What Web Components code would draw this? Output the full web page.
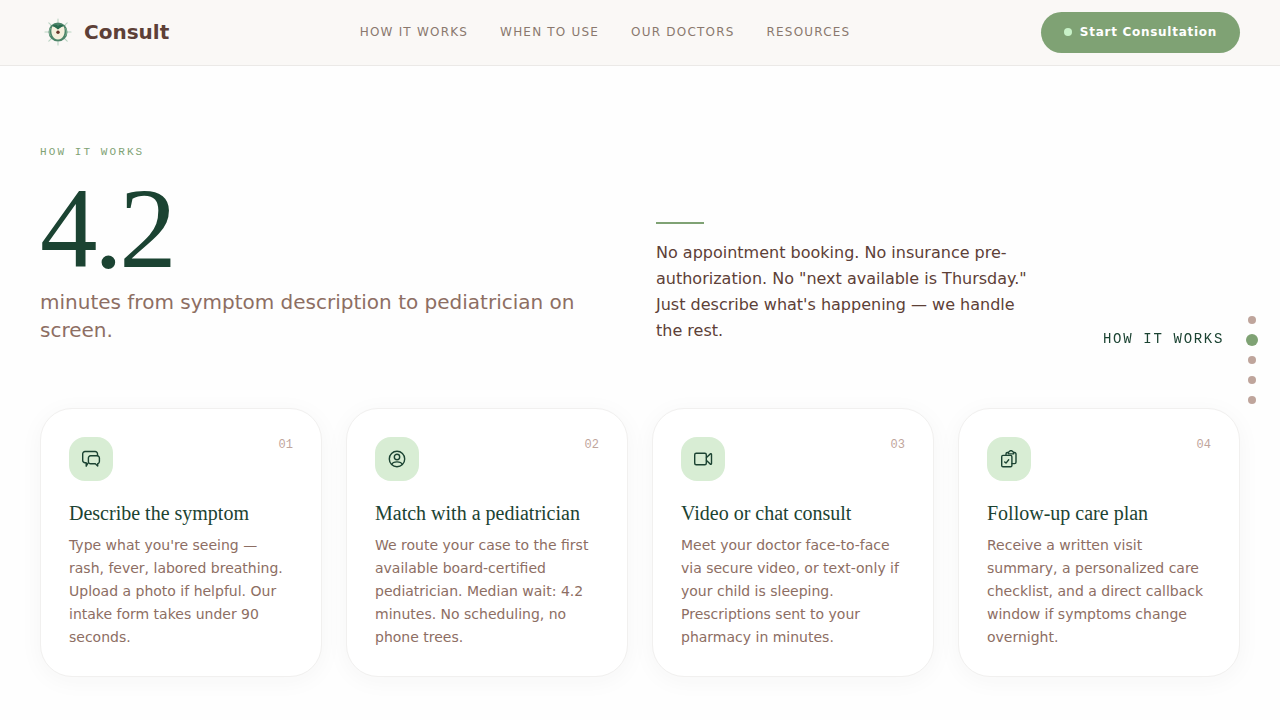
<!DOCTYPE html>
<html lang="en">
<head>
<meta charset="utf-8">
<meta name="viewport" content="width=device-width, initial-scale=1">
<title>Consult</title>
<style>
:root {
  --forest: #1b4332;
  --sage: #7fa274;
  --mint: #d8edd4;
  --bark: #5d4037;
  --clay: #8d6e63;
  --sand: #bfa59c;
  --sans: "DejaVu Sans", sans-serif;
  --serif: "Liberation Serif", serif;
  --mono: "Liberation Mono", monospace;
}
body { margin: 0; background: #fefefe; color: var(--bark); font-family: var(--sans); }
</style>
</head>
<body>
<site-header>
  <brand-mark slot="brand">Consult</brand-mark>
  <nav-link href="#how">How it works</nav-link>
  <nav-link href="#when">When to use</nav-link>
  <nav-link href="#doctors">Our doctors</nav-link>
  <nav-link href="#resources">Resources</nav-link>
  <cta-button slot="action">Start Consultation</cta-button>
</site-header>
<main>
  <how-section>
    <stat-intro slot="intro" eyebrow="How it works" value="4.2">minutes from symptom description to pediatrician on screen.</stat-intro>
    <lead-note slot="intro">No appointment booking. No insurance pre-authorization. No "next available is Thursday." Just describe what's happening — we handle the rest.</lead-note>
    <step-card icon="chat" number="01" heading="Describe the symptom">Type what you're seeing — rash, fever, labored breathing. Upload a photo if helpful. Our intake form takes under 90 seconds.</step-card>
    <step-card icon="person" number="02" heading="Match with a pediatrician">We route your case to the first available board-certified pediatrician. Median wait: 4.2 minutes. No scheduling, no phone trees.</step-card>
    <step-card icon="video" number="03" heading="Video or chat consult">Meet your doctor face-to-face via secure video, or text-only if your child is sleeping. Prescriptions sent to your pharmacy in minutes.</step-card>
    <step-card icon="clipboard" number="04" heading="Follow-up care plan">Receive a written visit summary, a personalized care checklist, and a direct callback window if symptoms change overnight.</step-card>
  </how-section>
</main>
<section-dots></section-dots>

<script>
class Base extends HTMLElement {
  connectedCallback() {
    if (!this.shadowRoot) this.attachShadow({ mode: "open" }).innerHTML = this.render();
  }
}

customElements.define("site-header", class extends Base {
  render() {
    return `<style>
      :host { display: block; background: #faf8f6; border-bottom: 1px solid #ebe9e7; }
      header { display: flex; align-items: center; justify-content: space-between; padding: 12px 40px; }
      nav { display: flex; gap: 32px; }
    </style>
    <header><slot name="brand"></slot><nav aria-label="Main"><slot></slot></nav><slot name="action"></slot></header>`;
  }
});

customElements.define("brand-mark", class extends Base {
  render() {
    const rays = [0, 45, 90, 135, 180, 225, 270, 315]
      .map(a => `<path d="M18 8V5" transform="rotate(${a} 18 18)"/>`).join("");
    return `<style>
      :host { display: block; }
      a { display: flex; align-items: center; gap: 8px; padding-bottom: 1px; color: var(--bark); text-decoration: none; font-size: 20px; line-height: 28px; font-weight: 700; }
      svg { width: 36px; height: 36px; }
    </style>
    <a href="#top"><svg viewBox="0 0 36 36" fill="none" aria-hidden="true">
      <g stroke="#b9d3c2" stroke-width="1.1" stroke-linecap="round">${rays}</g>
      <circle cx="18" cy="18" r="9.5" fill="#4c8468"/>
      <path d="M10.300 14a8.700 8.700 0 0 0 0 8M25.700 14a8.700 8.700 0 0 1 0 8" stroke="#7fae92" stroke-width="1"/>
      <path d="M12.300 12.500C14.300 12.200 16.200 13.600 18 15.200 19.800 13.600 21.700 12.200 23.700 12.500 25 15 25 19 23.600 21.800 22.500 24.200 20.500 25.600 18 25.600S13.500 24.200 12.400 21.800C11 19 11 15 12.300 12.500Z" fill="#f4efdc"/>
      <path d="M12.200 11.800C14.500 10.200 16.800 10.600 18 12.200 19.200 10.600 21.500 10.200 23.800 11.800 22.300 12.500 20 13.500 18 15.600 16 13.500 13.700 12.500 12.200 11.800Z" fill="#2a6b4f"/>
      <circle cx="18" cy="18.300" r="1.700" fill="#6a3328"/>
    </svg><slot></slot></a>`;
  }
});

customElements.define("nav-link", class extends Base {
  render() {
    return `<style>
      :host { display: block; }
      a { display: block; color: #8a786e; text-decoration: none; text-transform: uppercase; white-space: nowrap; font-size: 12px; line-height: 17px; letter-spacing: 0.1em; }
    </style>
    <a href="${this.getAttribute("href")}"><slot></slot></a>`;
  }
});

customElements.define("cta-button", class extends Base {
  render() {
    return `<style>
      :host { display: block; }
      button { display: flex; align-items: center; gap: 8px; margin: 0; border: 0; border-radius: 24px; padding: 10px 23px 11px; background: var(--sage); color: #fff; font: 700 12px/20px var(--sans); letter-spacing: 0.06em; white-space: nowrap; }
      i { width: 8px; height: 8px; border-radius: 50%; background: #c8f2c8; }
    </style>
    <button type="button"><i></i><slot></slot></button>`;
  }
});

customElements.define("how-section", class extends Base {
  render() {
    return `<style>
      :host { display: block; }
      section { padding: 80px 40px 40px; }
      .intro { display: grid; grid-template-columns: 1fr 1fr; gap: 32px; align-items: end; margin-bottom: 64px; }
      .steps { display: grid; grid-template-columns: repeat(4, 1fr); gap: 24px; }
    </style>
    <section id="how">
      <div class="intro"><slot name="intro"></slot></div>
      <div class="steps"><slot></slot></div>
    </section>`;
  }
});

customElements.define("stat-intro", class extends Base {
  render() {
    return `<style>
      :host { display: block; }
      p { margin: 0; }
      .eyebrow { margin-bottom: 20px; color: var(--sage); font: 11px/12px var(--mono); letter-spacing: 0.19em; text-transform: uppercase; }
      .value { margin-bottom: 8px; color: var(--forest); font: 115px/102px var(--serif); letter-spacing: -0.03em; }
      .caption { color: var(--clay); font-size: 20px; line-height: 28px; }
    </style>
    <p class="eyebrow">${this.getAttribute("eyebrow")}</p>
    <p class="value">${this.getAttribute("value")}</p>
    <p class="caption"><slot></slot></p>`;
  }
});

customElements.define("lead-note", class extends Base {
  render() {
    return `<style>
      :host { display: block; max-width: 384px; }
      hr { width: 48px; height: 2px; margin: 0 0 16px; border: 0; background: var(--sage); }
      p { margin: 0; font-size: 16px; line-height: 26px; }
    </style>
    <hr><p><slot></slot></p>`;
  }
});

const ICONS = {
  chat: `<path d="M7 14.200 5.200 17.200V13.700H4A2.300 2.300 0 0 1 1.700 11.400V4.800A2.300 2.300 0 0 1 4 2.500H14.200A2.300 2.300 0 0 1 16.500 4.800V6.500"/><path d="M9.500 6.800H16.300A2.100 2.100 0 0 1 18.400 8.900V12.600A2.100 2.100 0 0 1 16.700 14.700V17L14.300 14.800H9.500A2.100 2.100 0 0 1 7.400 12.700V8.900A2.100 2.100 0 0 1 9.500 6.800Z"/>`,
  person: `<circle cx="10" cy="10" r="7.700"/><circle cx="10" cy="8" r="2.700"/><path d="M4.700 15.400C5.500 13.400 7.300 12.900 10 12.900S14.500 13.400 15.300 15.400"/>`,
  video: `<rect x="1.700" y="4.200" width="11.600" height="11.600" rx="1.500"/><path d="M13.500 8.600 17.200 4.900A.8.800 0 0 1 18.500 5.400V14.600A.8.800 0 0 1 17.200 15.100L13.500 11.400"/>`,
  clipboard: `<rect x="2.700" y="6.400" width="10.200" height="11.400" rx="1.300"/><path d="M7 6.300V4.900A1.400 1.400 0 0 1 8.400 3.500H9.200M14.800 3.500H15.600A1.400 1.400 0 0 1 17 4.900V13.200A1.400 1.400 0 0 1 15.600 14.600H13"/><path d="M9.400 4.900V3.600A1 1 0 0 1 10.400 2.600L11 1.800H13L13.600 2.600A1 1 0 0 1 14.600 3.600V4.900Z"/><path d="M5.700 12.900 7 14.100 9.700 10.700"/>`
};

customElements.define("step-card", class extends Base {
  render() {
    return `<style>
      :host { display: block; }
      article { box-sizing: border-box; height: 100%; padding: 28px 28px 27px; border: 1px solid #f1f0ef; border-radius: 32px; background: #fff; box-shadow: 0 4px 24px rgba(60, 50, 45, 0.04); }
      .top { display: flex; justify-content: space-between; margin-bottom: 20px; }
      .tile { display: grid; place-items: center; width: 44px; height: 44px; border-radius: 16px; background: var(--mint); color: var(--forest); }
      svg { width: 20px; height: 20px; }
      .number { color: var(--sand); font: 12px/16px var(--mono); }
      h3 { margin: 0 0 8px; color: var(--forest); font: 400 20px/25px var(--serif); }
      p { margin: 0; color: var(--clay); font-size: 14px; line-height: 23px; }
    </style>
    <article>
      <div class="top">
        <span class="tile"><svg viewBox="0 0 20 20" fill="none" stroke="currentColor" stroke-width="1.400" stroke-linecap="round" stroke-linejoin="round" aria-hidden="true">${ICONS[this.getAttribute("icon")]}</svg></span>
        <span class="number">${this.getAttribute("number")}</span>
      </div>
      <h3>${this.getAttribute("heading")}</h3>
      <p><slot></slot></p>
    </article>`;
  }
});

customElements.define("section-dots", class extends Base {
  render() {
    const names = ["Top", "How it works", "When to use", "Our doctors", "Resources"];
    const dots = names.map((n, i) => i === 1
      ? `<a class="on" href="#how" aria-current="true"><span>${n}</span></a>`
      : `<a href="#s${i}" aria-label="${n}"></a>`).join("");
    return `<style>
      :host { position: fixed; right: 24px; top: 50%; transform: translateY(-50%); }
      nav { display: flex; flex-direction: column; gap: 12px; }
      a { position: relative; display: block; width: 8px; height: 8px; border-radius: 50%; background: var(--sand); text-decoration: none; }
      .on { background: var(--sage); box-shadow: 0 0 0 2px var(--sage); }
      span { position: absolute; right: 100%; top: 50%; transform: translateY(-50%); margin-right: 24px; padding-bottom: 2px; color: var(--forest); font: 14px/20px var(--mono); letter-spacing: 0.12em; text-transform: uppercase; white-space: nowrap; }
    </style>
    <nav aria-label="Sections">${dots}</nav>`;
  }
});
</script>
</body>
</html>
